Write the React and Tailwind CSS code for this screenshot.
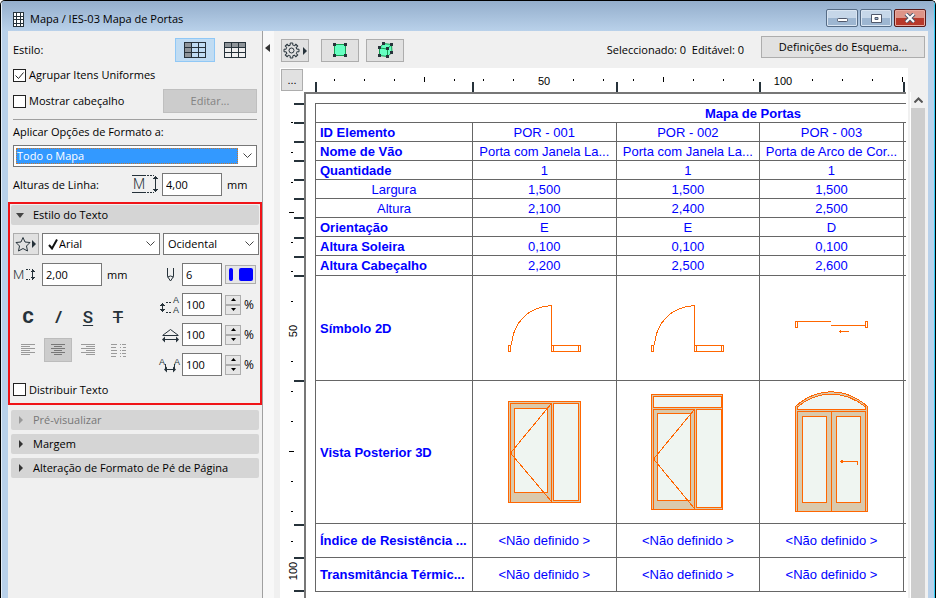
import { useState } from 'react';

const INK = '#26323a';

const COLUMNS = [
    { id: 'POR - 001', name: 'Porta com Janela La...', width: '1,500', height: '2,100', side: 'E', sill: '0,100', head: '2,200' },
    { id: 'POR - 002', name: 'Porta com Janela La...', width: '1,500', height: '2,400', side: 'E', sill: '0,100', head: '2,500' },
    { id: 'POR - 003', name: 'Porta de Arco de Cor...', width: '1,500', height: '2,500', side: 'D', sill: '0,100', head: '2,600' },
];

const ROWS = [
    { label: 'ID Elemento', get: c => c.id },
    { label: 'Nome de Vão', get: c => c.name },
    { label: 'Quantidade', get: () => '1' },
    { label: 'Largura', get: c => c.width, sub: true },
    { label: 'Altura', get: c => c.height, sub: true },
    { label: 'Orientação', get: c => c.side },
    { label: 'Altura Soleira', get: c => c.sill },
    { label: 'Altura Cabeçalho', get: c => c.head, tall: true },
];

const PLANS = [SwingPlan, SwingPlan, SlidingPlan];
const VIEWS = [DoorView, TransomDoorView, ArchDoorView];

/* ---------- drawings ---------- */

function SwingPlan() {
    return (
        <svg width="73" height="48" fill="none" stroke="#ff6600" shapeRendering="crispEdges" className="mx-auto block">
            <path d="M3.500 41.500C4.500 21 18 3 43.500 1.500V47" />
            <path d="M0.500 41.500h2v6h-2zM43.500 41.500h29v6h-29zM45.500 41.500v6M70.500 41.500v6" />
        </svg>
    );
}

function SlidingPlan() {
    return (
        <svg width="73" height="48" fill="none" stroke="#ff6600" shapeRendering="crispEdges" className="mx-auto block">
            <path d="M0.500 17.500h2v6h-2zM70.500 17.500h2v6h-2zM2 17.500h34M36 21.500h34M44 27.500h10M45.500 26v3" />
        </svg>
    );
}

function DoorView() {
    return (
        <svg width="73" height="122" fill="none" stroke="#ff6600" shapeRendering="crispEdges" className="mx-auto block">
            <rect x="0.500" y="10.500" width="72" height="101" fill="#dac9ac" />
            <path d="M2.500 111V12.500h41V111" />
            <rect x="6.500" y="17.500" width="33" height="84" fill="#eff5f1" />
            <rect x="45.500" y="12.500" width="25" height="97" fill="#eff5f1" />
            <path d="M43 13L2.500 62L43 110" />
        </svg>
    );
}

function TransomDoorView() {
    return (
        <svg width="73" height="122" fill="none" stroke="#ff6600" shapeRendering="crispEdges" className="mx-auto block">
            <rect x="0.500" y="3.500" width="71" height="115" fill="#dac9ac" />
            <rect x="2.500" y="5.500" width="68" height="11" fill="#eff5f1" />
            <path d="M2.500 118V18.500h41V118" />
            <rect x="6.500" y="22.500" width="33" height="87" fill="#eff5f1" />
            <rect x="45.500" y="18.500" width="25" height="98" fill="#eff5f1" />
            <path d="M43 19L2.500 68L43 117" />
        </svg>
    );
}

function ArchDoorView() {
    return (
        <svg width="73" height="122" fill="none" stroke="#ff6600" shapeRendering="crispEdges" className="mx-auto block">
            <path d="M0.500 120.500V15.500C22 -4 50 -4 72.500 15.500V120.500z" fill="#dac9ac" />
            <path d="M2.500 18.500V16C22 -1 50 -1 70.500 16V18.500z" fill="#eff5f1" />
            <path d="M2.500 120V20.500h68V120M36.500 20v100" />
            <rect x="7.500" y="25.500" width="24" height="86" fill="#eff5f1" />
            <rect x="41.500" y="25.500" width="24" height="86" fill="#eff5f1" />
            <path d="M45 70.500h17.500v3M47.500 69v3M46.500 69v3" />
        </svg>
    );
}

/* ---------- rulers ---------- */

const H_MARKS = [11, 168, 312, 455, 599];
const V_MARKS = [11, 30, 49, 68, 87, 106, 125, 145, 164, 183, 288, 432, 465, 498];
const UNITS = Array.from({ length: 23 }, (_, i) => i + 1);

function HorizontalRuler() {
    return (
        <svg className="h-full w-full" shapeRendering="crispEdges">
            {UNITS.filter(i => i % 8).map(i => {
                const x = Math.round(i * 29.9);
                return i % 4 === 0
                    ? <rect key={i} x={x} y="9" width="1" height="5" />
                    : <rect key={i} x={x} y="11" width="1" height="2" />;
            })}
            {H_MARKS.map(x => <rect key={x} x={x} y="14" width="2" height="10" fill={INK} />)}
            <text x="240" y="17" fontSize="11" textAnchor="middle">50</text>
            <text x="479" y="17" fontSize="11" textAnchor="middle">100</text>
        </svg>
    );
}

function VerticalRuler() {
    return (
        <svg className="h-full w-full" shapeRendering="crispEdges">
            {UNITS.filter(i => i % 8).map(i => {
                const y = Math.round(i * 29.9);
                return i % 4 === 0
                    ? <rect key={i} x="9" y={y} width="5" height="1" />
                    : <rect key={i} x="11" y={y} width="2" height="1" />;
            })}
            {V_MARKS.map(y => <rect key={y} x="14" y={y} width="10" height="2" fill={INK} />)}
            <text transform="translate(17 239) rotate(-90)" fontSize="11" textAnchor="middle">50</text>
            <text transform="translate(17 479) rotate(-90)" fontSize="11" textAnchor="middle">100</text>
        </svg>
    );
}

/* ---------- icons ---------- */

function GridIcon({ side }) {
    return (
        <svg width="22" height="16" fill="none" stroke={INK} shapeRendering="crispEdges">
            {side === 'left' ? <rect width="7" height="16" fill="#8e9499" stroke="none" /> : <rect width="22" height="5" fill="#8e9499" stroke="none" />}
            <path d="M0.500 0.500h21v15h-21zM7.500 0v16M14.500 0v16M0 5.500h22M0 10.500h22" />
        </svg>
    );
}

function RowHeightIcon() {
    return (
        <svg width="26" height="19" fill="none" stroke={INK} shapeRendering="crispEdges">
            <path d="M0 0.500h14M0 17.500h14M23.500 2v14" />
            <path d="M15 0.500h7M15 17.500h7" strokeDasharray="2 1" />
            <path d="M21 4l2.500-3l2.500 3zM21 14l2.500 3l2.500-3z" fill={INK} stroke="none" />
            <text x="1" y="14" fontSize="14" fill={INK} stroke="none" className="font-['Roboto',sans-serif] font-light">M</text>
        </svg>
    );
}

function TextHeightIcon() {
    return (
        <svg width="23" height="16" fill="none" stroke={INK} shapeRendering="crispEdges">
            <path d="M13 2.500h4M13 12.500h4" strokeDasharray="2 1" />
            <path d="M19.500 2v11M17.500 4.500h4M17.500 10.500h4M18.500 3.500h2M18.500 11.500h2" />
            <text x="0" y="12" fontSize="13" fill={INK} stroke="none" className="font-['Roboto',sans-serif] font-light">M</text>
        </svg>
    );
}

function PenIcon() {
    return (
        <svg width="9" height="16" fill="none" stroke={INK}>
            <path d="M1.500 1v8.500l3 4.500l3-4.500V1M1.500 10l3-1l3 1" />
        </svg>
    );
}

function LineSpacingIcon() {
    return (
        <svg width="20" height="22" fill="none" stroke={INK} shapeRendering="crispEdges">
            <path d="M6 8.500h6M6 18.500h6" strokeDasharray="2 1" />
            <path d="M2.500 9v9" />
            <path d="M0 12l2.500-3.500l2.500 3.500zM0 15l2.500 3.500l2.500-3.500z" fill={INK} stroke="none" />
            <text x="13" y="9" fontSize="9" fill={INK} stroke="none" className="font-['Liberation_Sans',sans-serif]">A</text>
            <text x="13" y="19" fontSize="9" fill={INK} stroke="none" className="font-['Liberation_Sans',sans-serif]">A</text>
        </svg>
    );
}

function WidthFactorIcon() {
    return (
        <svg width="19" height="16" fill="none" stroke={INK}>
            <path d="M1.500 8.500L9.500 2.500L17.500 8.500" />
            <path d="M2 8.500h15M2 12.500h15" shapeRendering="crispEdges" />
            <path d="M1 12.500l3-3v6zM18 12.500l-3-3v6z" fill={INK} stroke="none" />
        </svg>
    );
}

function SpacingIcon() {
    return (
        <svg width="24" height="19" fill="none" stroke={INK}>
            <text x="1" y="10" fontSize="9" fill={INK} stroke="none" className="font-['Liberation_Sans',sans-serif]">A</text>
            <text x="16" y="10" fontSize="9" fill={INK} stroke="none" className="font-['Liberation_Sans',sans-serif]">A</text>
            <path d="M7.500 9v6M16.500 9v6M8 14.500h8" shapeRendering="crispEdges" />
            <path d="M6 14.500l3-3v6zM18 14.500l-3-3v6z" fill={INK} stroke="none" />
        </svg>
    );
}

const GEAR_TEETH = [0, 45, 90, 135, 180, 225, 270, 315];

function GearIcon() {
    return (
        <svg width="24" height="17" fill="none" stroke={INK}>
            {GEAR_TEETH.map(a => (
                <path key={a} transform={`rotate(${a} 8.500 8.500)`} d="M13.800 7.200H16v2.600H13.800A5.500 5.500 0 0 1 13.170 11.330" />
            ))}
            <circle cx="8.500" cy="8.500" r="2.500" />
            <path d="M20 5v8l4-4z" fill={INK} stroke="none" />
        </svg>
    );
}

const ALIGN_PATHS = {
    left: 'M0 0.500h14M0 2.500h9M0 4.500h14M0 6.500h9M0 8.500h14M0 10.500h9',
    center: 'M0 0.500h14M3 2.500h8M0 4.500h14M3 6.500h8M0 8.500h14M3 10.500h8',
    right: 'M0 0.500h14M5 2.500h9M0 4.500h14M5 6.500h9M0 8.500h14M5 10.500h9',
    justify: 'M0 0.500h6M0 3.500h5M0 6.500h6M0 9.500h6M0 12.500h5M9 0.500h1M11 0.500h4M9 3.500h1M12 3.500h3M9 6.500h1M11 6.500h4M9 9.500h1M11 9.500h4M9 12.500h1M12 12.500h3',
};

function AlignIcon({ kind }) {
    return (
        <svg width="15" height="13" fill="none" stroke={kind === 'center' ? '#777' : '#9a9a9a'} shapeRendering="crispEdges">
            <path d={ALIGN_PATHS[kind]} />
        </svg>
    );
}

function Chevron() {
    return (
        <svg width="9" height="6" fill="none" stroke="#444" className="pointer-events-none absolute top-1/2 right-1 -translate-y-1/2">
            <path d="M0.500 0.500l4 4l4-4" />
        </svg>
    );
}

/* ---------- controls ---------- */

function NumberField({ label, value, className }) {
    const [text, setText] = useState(value);
    return (
        <input
            aria-label={label}
            value={text}
            onChange={e => setText(e.target.value)}
            className={`h-[23px] border border-[#777] bg-white px-[3px] outline-none ${className}`}
        />
    );
}

function Tick({ label, defaultChecked }) {
    return (
        <label className="flex h-[13px] items-center gap-[3px]">
            <span className="relative flex">
                <input type="checkbox" defaultChecked={defaultChecked} className="peer size-[13px] appearance-none border border-[#222] bg-white" />
                <svg width="13" height="13" fill="none" stroke="#222" className="pointer-events-none absolute inset-0 hidden peer-checked:block">
                    <path d="M2.500 6.500l3 3l5-6" />
                </svg>
            </span>
            {label}
        </label>
    );
}

function PercentRow({ label, icon }) {
    return (
        <div className="flex items-center justify-end">
            <span className="flex h-[23px] w-6 items-center justify-center">{icon}</span>
            <NumberField label={label} value="100" className="w-10" />
            <span className="mx-[3px] flex flex-col">
                <button aria-label={`Aumentar ${label}`} className="flex h-[10px] w-4 items-center justify-center border border-[#adadad] bg-[#e6e6e6]">
                    <svg width="5" height="3"><path d="M0 3L2.500 0L5 3z" /></svg>
                </button>
                <button aria-label={`Diminuir ${label}`} className="flex h-[10px] w-4 items-center justify-center border border-[#adadad] bg-[#e6e6e6]">
                    <svg width="5" height="3"><path d="M0 0L2.500 3L5 0z" /></svg>
                </button>
            </span>
            <span className="w-3 text-[12px]">%</span>
        </div>
    );
}

function SectionHeader({ title, open, disabled }) {
    return (
        <button disabled={disabled} className="flex h-5 w-full items-center rounded-[2px] bg-[#d5d5d5] text-left disabled:text-[#777]">
            <span className="flex w-[22px] items-center pl-[5px]">
                {open
                    ? <svg width="8" height="5" fill="#444"><path d="M0 0h8L4 5z" /></svg>
                    : <svg width="8" height="8" fill={disabled ? '#999' : '#333'}><path d="M3 0v8l4-4z" /></svg>}
            </span>
            {title}
        </button>
    );
}

function TitleBar() {
    return (
        <header className="flex h-[30px] shrink-0 items-end bg-linear-to-b from-[#94aecc] to-[#b9d1ea] pr-2 pb-1 pl-[11px]">
            <svg width="11" height="15" shapeRendering="crispEdges">
                <rect x="0.500" y="0.500" width="10" height="14" fill="#fff" stroke={INK} />
                <path d="M3.500 0v15M7.500 0v15M0 4.500h11M0 7.500h11M0 11.500h11" stroke={INK} />
            </svg>
            <h1 className="ml-[6px] flex-1">Mapa / IES-03 Mapa de Portas</h1>
            <div className="flex gap-[2px]">
                <button aria-label="Minimizar" className="flex h-[18px] w-8 items-center justify-center rounded-[2px] border border-[#566c86] bg-linear-to-b from-[#c6d7e9] from-50% to-[#9db6d1] to-50% shadow-[inset_0_0_0_1px_#d9e5f2]">
                    <svg width="11" height="10"><rect x="0.500" y="5.500" width="10" height="3" rx="1" fill="#fff" stroke="#50586b" /></svg>
                </button>
                <button aria-label="Maximizar" className="flex h-[18px] w-8 items-center justify-center rounded-[2px] border border-[#566c86] bg-linear-to-b from-[#c6d7e9] from-50% to-[#9db6d1] to-50% shadow-[inset_0_0_0_1px_#d9e5f2]">
                    <svg width="11" height="9"><path d="M0.500 0.500h10v8h-10zM4 3.500v2h3v-2z" fill="#fff" fillRule="evenodd" stroke="#50586b" /></svg>
                </button>
                <button aria-label="Fechar" className="flex h-[18px] w-8 items-center justify-center rounded-[2px] border border-[#5a1a18] bg-linear-to-b from-[#dd9488] from-50% to-[#b7382a] to-50% shadow-[inset_0_0_0_1px_#e8aaa0]">
                    <svg width="12" height="10">
                        <path d="M2 1l8 8M10 1l-8 8" stroke="#50586b" strokeWidth="4" />
                        <path d="M2 1l8 8M10 1l-8 8" stroke="#fff" strokeWidth="2" />
                    </svg>
                </button>
            </div>
        </header>
    );
}

function FormatPanel() {
    return (
        <aside className="w-[255px] shrink-0 border-r border-[#a0a0a0] pt-[7px]">
            <div className="px-[5px]">
                <div className="flex h-6 items-center pr-[2px]">
                    <span className="flex-1">Estilo:</span>
                    <button aria-label="Cabeçalho à esquerda" className="flex h-6 w-10 items-center justify-center border border-[#90c8f6] bg-[#c0dcf3]"><GridIcon side="left" /></button>
                    <button aria-label="Cabeçalho no topo" className="flex h-6 w-10 items-center justify-center"><GridIcon side="top" /></button>
                </div>
                <div className="flex h-[26px] items-center"><Tick label="Agrupar Itens Uniformes" defaultChecked /></div>
                <div className="flex h-[26px] items-center justify-between">
                    <Tick label="Mostrar cabeçalho" />
                    <button disabled className="h-6 w-[94px] border border-[#bfbfbf] bg-[#ccc] text-[#838383]">Editar...</button>
                </div>
                <hr className="mt-[5px] border-[#a0a0a0]" />
                <label htmlFor="scope" className="flex h-6 items-center">Aplicar Opções de Formato a:</label>
                <div className="relative mt-px h-[22px] border border-[#777] bg-white p-[2px] pr-[18px]">
                    <select id="scope" className="block h-4 w-full appearance-none border border-dotted border-[#c87830] bg-[#3399ff] leading-[14px] text-white outline-none">
                        <option>Todo o Mapa</option>
                    </select>
                    <Chevron />
                </div>
                <div className="mt-[6px] flex items-center">
                    <span className="flex-1">Alturas de Linha:</span>
                    <RowHeightIcon />
                    <NumberField label="Alturas de Linha" value="4,00" className="ml-1 w-[60px]" />
                    <span className="w-[35px] pl-[5px]">mm</span>
                </div>
            </div>

            <section className="mt-[6px] border-2 border-[#f01418] px-px pt-px pb-[7px]">
                <SectionHeader title="Estilo do Texto" open />
                <div className="mt-[8px] flex h-[22px] gap-[3px] pl-[2px]">
                    <button aria-label="Favoritos" className="flex w-[26px] items-center justify-center border border-[#adadad] bg-[#e1e1e1]">
                        <svg width="22" height="16" fill="none" stroke={INK}>
                            <path d="M8 1.500l2 4.500l5 0.500l-3.500 3.500l1 5l-4.500-2.500l-4.500 2.500l1-5l-3.500-3.500l5-0.500z" />
                            <path d="M17 4v8l4-4z" fill={INK} stroke="none" />
                        </svg>
                    </button>
                    <div className="relative flex w-[118px] items-center border border-[#777] bg-white pl-[5px]">
                        <svg width="11" height="11" fill="none" stroke="#111" strokeWidth="2"><path d="M1 6l3 3.500l5-9" /></svg>
                        <select aria-label="Tipo de letra" className="flex-1 appearance-none bg-white outline-none"><option>Arial</option></select>
                        <Chevron />
                    </div>
                    <div className="relative flex flex-1 items-center border border-[#777] bg-white pl-1">
                        <select aria-label="Alfabeto" className="w-full appearance-none bg-white outline-none"><option>Ocidental</option></select>
                        <Chevron />
                    </div>
                </div>
                <div className="mt-2 flex h-[23px] items-center pl-[2px]">
                    <span className="w-[29px]"><TextHeightIcon /></span>
                    <NumberField label="Altura do texto" value="2,00" className="w-[60px]" />
                    <span className="flex-1 pl-[5px]">mm</span>
                    <PenIcon />
                    <NumberField label="Caneta" value="6" className="ml-[7px] w-10" />
                    <button aria-label="Cor da caneta" className="mx-[3px] flex h-[19px] w-[31px] items-center justify-center gap-[6px] border border-[#adadad] bg-[#e6e6e6]">
                        <span className="h-[13px] w-1 rounded-[2px] bg-[#0000ff]" />
                        <span className="h-[13px] w-[14px] rounded-[2px] bg-[#0000ff]" />
                    </button>
                </div>
                <div className="mt-[7px] flex justify-between">
                    <div className="grid grid-cols-4 content-start pt-3 pl-[2px] font-['Liberation_Sans',sans-serif] text-[17px] leading-none text-[#26323a]">
                        <button aria-label="Negrito" className="flex h-6 w-[30px] items-center justify-center font-['Roboto','Liberation_Sans',sans-serif] font-black">C</button>
                        <button aria-label="Itálico" className="flex h-6 w-[30px] items-center justify-center font-bold italic">/</button>
                        <button aria-label="Sublinhado" className="flex h-6 w-[30px] items-center justify-center font-['Roboto','Liberation_Sans',sans-serif] font-medium underline underline-offset-2">S</button>
                        <button aria-label="Rasurado" className="flex h-6 w-[30px] items-center justify-center font-['Roboto','Liberation_Sans',sans-serif] font-medium line-through">T</button>
                        <button aria-label="Alinhar à esquerda" className="mt-[9px] flex h-6 w-[30px] items-center justify-center"><AlignIcon kind="left" /></button>
                        <button aria-label="Centrar" className="mt-[9px] ml-px flex h-6 w-7 items-center justify-center border border-[#bcbcbc] bg-[#ccc]"><AlignIcon kind="center" /></button>
                        <button aria-label="Alinhar à direita" className="mt-[9px] flex h-6 w-[30px] items-center justify-center"><AlignIcon kind="right" /></button>
                        <button aria-label="Justificar" className="mt-[9px] flex h-6 w-[30px] items-center justify-center"><AlignIcon kind="justify" /></button>
                    </div>
                    <div className="flex flex-col gap-[7px] pr-[3px]">
                        <PercentRow label="Espaçamento entre linhas" icon={<LineSpacingIcon />} />
                        <PercentRow label="Factor de largura" icon={<WidthFactorIcon />} />
                        <PercentRow label="Factor de espaçamento" icon={<SpacingIcon />} />
                    </div>
                </div>
                <div className="mt-[7px] pl-[2px]"><Tick label="Distribuir Texto" /></div>
            </section>

            <div className="mt-[5px] flex flex-col gap-1 px-[3px]">
                <SectionHeader title="Pré-visualizar" disabled />
                <SectionHeader title="Margem" />
                <SectionHeader title="Alteração de Formato de Pé de Página" />
            </div>
        </aside>
    );
}

function Toolbar() {
    return (
        <div className="flex h-[37px] shrink-0 items-center pr-[3px] pl-[7px]">
            <button aria-label="Opções" className="mt-px flex h-[23px] w-7 items-center justify-center border border-[#adadad] bg-[#e1e1e1]">
                <GearIcon />
            </button>
            <button aria-label="Seleccionar em planta" className="mt-px ml-3 flex h-[23px] w-[38px] items-center justify-center border border-[#adadad] bg-[#e1e1e1]">
                <svg width="14" height="14" shapeRendering="crispEdges">
                    <rect x="1.500" y="1.500" width="11" height="11" fill="#66ffc2" stroke="#14a050" />
                    <path d="M0 0h3v3h-3zM11 0h3v3h-3zM0 11h3v3h-3zM11 11h3v3h-3z" fill={INK} />
                </svg>
            </button>
            <button aria-label="Seleccionar em 3D" className="mt-px ml-[7px] flex h-[23px] w-[38px] items-center justify-center border border-[#adadad] bg-[#e1e1e1]">
                <svg width="15" height="16">
                    <path d="M1.500 6L5.500 1.500L13.500 2.500L14 10.500L9.500 14.500L1.500 13.500z" fill="#66ffc2" stroke="#14a050" />
                    <path d="M1.500 6L9.500 7L13.500 2.500M9.500 7V14" fill="none" stroke="#14a050" />
                    <path d="M0 4h3v3h-3zM4 0h3v3h-3zM12 1h3v3h-3zM8 5h3v3h-3zM0 12h3v3h-3zM8 13h3v3h-3zM12 9h3v3h-3z" fill={INK} />
                </svg>
            </button>
            <span className="ml-auto">Seleccionado: 0&nbsp; Editável: 0</span>
            <button className="mb-[5px] ml-[17px] h-[22px] w-[164px] border border-[#adadad] bg-[#e1e1e1]">Definições do Esquema...</button>
        </div>
    );
}

function Schedule() {
    return (
        <table className="mt-[9px] ml-[9px] w-[876px] table-fixed border-collapse text-center text-[13px] leading-none text-[#0000ff] [&_td]:border [&_td]:border-[#666] [&_td]:p-0 [&_td]:whitespace-nowrap [&_th]:border [&_th]:border-[#666] [&_th]:p-0 [&_th]:whitespace-nowrap">
            <colgroup>
                <col className="w-[157px]" />
                <col span="5" />
            </colgroup>
            <thead>
                <tr className="h-[19px]"><th colSpan="6">Mapa de Portas</th></tr>
            </thead>
            <tbody>
                {ROWS.map(r => (
                    <tr key={r.label} className={r.tall ? 'h-5' : 'h-[19px]'}>
                        <th className={r.sub ? 'font-normal' : 'text-left'}><span className={r.sub ? '' : 'pl-1'}>{r.label}</span></th>
                        {COLUMNS.map(c => <td key={c.id}>{r.get(c)}</td>)}
                        <td /><td />
                    </tr>
                ))}
                <tr className="h-[105px]">
                    <th className="text-left"><span className="pl-1">Símbolo 2D</span></th>
                    {PLANS.map((Plan, i) => <td key={i}><Plan /></td>)}
                    <td /><td />
                </tr>
                <tr className="h-[143px]">
                    <th className="text-left"><span className="pl-1">Vista Posterior 3D</span></th>
                    {VIEWS.map((View, i) => <td key={i}><View /></td>)}
                    <td /><td />
                </tr>
                {['Índice de Resistência ...', 'Transmitância Térmic...'].map(label => (
                    <tr key={label} className="h-[34px]">
                        <th className="text-left"><span className="pl-1">{label}</span></th>
                        {COLUMNS.map(c => <td key={c.id}>&lt;Não definido &gt;</td>)}
                        <td /><td />
                    </tr>
                ))}
            </tbody>
        </table>
    );
}

export default function App() {
    return (
        <div className="flex h-screen flex-col overflow-hidden rounded-t-[5px] border-x border-t border-black bg-[#b9d1ea] font-['Open_Sans','Noto_Sans',sans-serif] text-[11px] leading-4 text-black">
            <div className="flex min-h-0 flex-1 flex-col border-l border-l-[#e4eef8] border-r border-r-[#35cdf5]">
                <TitleBar />
                <div className="mr-[6px] ml-[6px] flex min-h-0 flex-1 bg-[#f0f0f0]">
                    <FormatPanel />
                    <div className="w-[11px] shrink-0 bg-[#f8f8f8] pt-[13px] pl-[2px]">
                        <button aria-label="Recolher painel" className="block">
                            <svg width="5" height="8" fill="#333"><path d="M5 0v8L0 4z" /></svg>
                        </button>
                    </div>
                    <main className="flex min-w-0 flex-1 flex-col">
                        <Toolbar />
                        <div className="flex min-h-0 flex-1 pl-[6px] font-['Liberation_Sans',sans-serif]">
                            <div className="flex min-w-0 flex-1 flex-col bg-white">
                                <div className="flex h-6 shrink-0">
                                    <div className="w-6 shrink-0 pt-px pl-px">
                                        <button aria-label="Mais opções" className="block h-[22px] w-[22px] border border-[#adadad] bg-[#e1e1e1]">...</button>
                                    </div>
                                    <div className="min-w-0 flex-1"><HorizontalRuler /></div>
                                </div>
                                <div className="flex min-h-0 flex-1">
                                    <div className="w-6 shrink-0"><VerticalRuler /></div>
                                    <div className="mr-[2px] min-w-0 flex-1 overflow-hidden border-t-2 border-l-2 border-[#777]">
                                        <Schedule />
                                    </div>
                                </div>
                            </div>
                            <div className="mt-6 ml-[2px] flex w-[18px] flex-col border-l border-white pr-[3px]">
                                <button aria-label="Deslocar para cima" className="flex h-4 items-center justify-center">
                                    <svg width="9" height="6" fill="none" stroke="#555" strokeWidth="2"><path d="M0.500 5.500l4-4l4 4" /></svg>
                                </button>
                                <div className="flex-1 bg-[#cdcdcd]" />
                            </div>
                        </div>
                    </main>
                </div>
            </div>
        </div>
    );
}
